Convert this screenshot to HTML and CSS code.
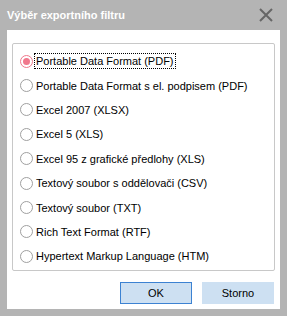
FILE: index.html
```html
<!DOCTYPE html>
<html lang="cs">
<head>
    <meta charset="UTF-8">
    <title>Výběr exportního filtru</title>
    <link rel="stylesheet" href="styles.css">
</head>
<body>
    <div class="dialog">
        <div class="titleBar">
            <span class="titleText">Výběr exportního filtru</span>
            <svg class="closeIcon" width="14" height="14" viewBox="0 0 14 14">
                <path d="M1 1 L13 13 M13 1 L1 13" stroke="#666" stroke-width="2" fill="none" />
            </svg>
        </div>
        <div class="content">
            <div class="groupBox">
                <label class="option"><span class="radio checked"></span><span class="label focused">Portable Data Format (PDF)</span></label>
                <label class="option"><span class="radio"></span><span class="label">Portable Data Format s el. podpisem (PDF)</span></label>
                <label class="option"><span class="radio"></span><span class="label">Excel 2007 (XLSX)</span></label>
                <label class="option"><span class="radio"></span><span class="label">Excel 5 (XLS)</span></label>
                <label class="option"><span class="radio"></span><span class="label">Excel 95 z grafické předlohy (XLS)</span></label>
                <label class="option"><span class="radio"></span><span class="label">Textový soubor s oddělovači (CSV)</span></label>
                <label class="option"><span class="radio"></span><span class="label">Textový soubor (TXT)</span></label>
                <label class="option"><span class="radio"></span><span class="label">Rich Text Format (RTF)</span></label>
                <label class="option"><span class="radio"></span><span class="label">Hypertext Markup Language (HTM)</span></label>
            </div>
            <div class="buttons">
                <button class="btn btnDefault">OK</button>
                <button class="btn">Storno</button>
            </div>
        </div>
    </div>
</body>
</html>
```
FILE: styles.css
```css
* {
    margin: 0;
    padding: 0;
    box-sizing: border-box;
}

html,
body {
    width: 100%;
    height: 100%;
}

body {
    background-color: rgb(180, 180, 180);
    font-family: "Liberation Sans", Arial, sans-serif;
    font-size: 11px;
    color: #000;
    overflow: hidden;
}

.dialog {
    display: flex;
    flex-direction: column;
    height: 316px;
}

.titleBar {
    height: 30px;
    display: flex;
    align-items: center;
    justify-content: space-between;
    padding: 0 14px 1px 7px;
}

.titleText {
    color: #fff;
    font-weight: bold;
    font-size: 11px;
}

.closeIcon {
    display: block;
}

.content {
    background-color: #fff;
    margin: 0 7px 7px 7px;
    flex: 1;
    display: flex;
    flex-direction: column;
    padding: 13px 5px 5px 5px;
}

.groupBox {
    height: 228px;
    border: 1px solid rgb(200, 200, 200);
    border-radius: 2px;
    padding: 5px 0 0 7px;
    display: grid;
    grid-template-rows: repeat(9, 24.4px);
    align-content: start;
}

.option {
    display: flex;
    align-items: center;
    gap: 1px;
}

.radio {
    width: 13px;
    height: 13px;
    border: 1px solid rgb(160, 160, 160);
    border-radius: 50%;
    background-color: #fff;
    position: relative;
}

.radio.checked {
    border-color: rgb(240, 120, 140);
}

.radio.checked::after {
    content: '';
    position: absolute;
    left: 2px;
    top: 2px;
    width: 7px;
    height: 7px;
    border-radius: 50%;
    background-color: rgb(240, 120, 140);
}

.label {
    padding: 1px 1px;
    border: 1px solid transparent;
    white-space: nowrap;
}

.label.focused {
    border: 1px dotted #000;
}

.buttons {
    margin-top: 11px;
    display: flex;
    justify-content: flex-end;
    gap: 10px;
    padding-right: 1px;
}

.btn {
    width: 72px;
    height: 22px;
    font-family: inherit;
    font-size: 11px;
    color: #000;
    background-color: rgb(205, 224, 242);
    border: 1px solid rgb(205, 224, 242);
}

.btnDefault {
    border-color: rgb(60, 130, 210);
}
```
